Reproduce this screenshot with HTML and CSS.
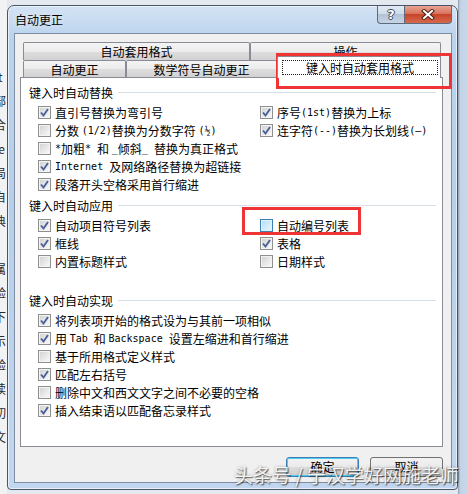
FILE: index.html
```html
<!DOCTYPE html>
<html lang="zh-CN">
<head>
<meta charset="UTF-8">
<title>自动更正</title>
<link rel="stylesheet" href="styles.css">
</head>
<body>
<div class="screen">
    <div class="bg-left">
        <div class="frags">
            <div>ft</div><div>部</div><div>合</div><div>te</div><div>局</div><div>自</div><div>典</div><div>&nbsp;</div>
            <div>属</div><div>验</div><div>下</div><div>示</div><div>验</div><div>读</div><div>切</div><div>文</div>
        </div>
    </div>
    <div class="stage">
        <div class="window">
            <div class="titlebar">
                <span class="title">自动更正</span>
                <div class="caption-btns">
                    <span class="cap help">?</span>
                    <span class="cap close">
                        <svg width="14" height="11" viewBox="0 0 14 11">
                            <path d="M3 2 L11 9 M11 2 L3 9" stroke="#4a1d14" stroke-width="4" stroke-linecap="square"/>
                            <path d="M3 2 L11 9 M11 2 L3 9" stroke="#fff" stroke-width="2" stroke-linecap="square"/>
                        </svg>
                    </span>
                </div>
            </div>
            <div class="client">
                <div class="book">
                    <div class="tabrow">
                        <div class="tab t-format">自动套用格式</div>
                        <div class="tab t-fill">操作</div>
                    </div>
                    <div class="tabrow">
                        <div class="tab t-auto">自动更正</div>
                        <div class="tab t-math">数学符号自动更正</div>
                        <div class="tab t-fill selected"><span class="focus">键入时自动套用格式</span></div>
                    </div>
                    <div class="panel">
                        <div class="group">
                            <div class="legend">键入时自动替换</div>
                            <div class="cols">
                                <div class="col">
                                    <div class="opt"><span class="cb on"><svg viewBox="0 0 11 11"><polyline points="2,5.5 4.5,8.5 9,2"/></svg></span>直引号替换为弯引号</div>
                                    <div class="opt"><span class="cb"></span>分数 <span class="en">(1/2)</span>替换为分数字符 <span class="en">(½)</span></div>
                                    <div class="opt"><span class="cb"></span><span class="en">*</span>加粗<span class="en">* </span>和 <span class="en">_</span>倾斜<span class="en">_ </span>替换为真正格式</div>
                                    <div class="opt"><span class="cb on"><svg viewBox="0 0 11 11"><polyline points="2,5.5 4.5,8.5 9,2"/></svg></span><span class="en">Internet </span>及网络路径替换为超链接</div>
                                    <div class="opt"><span class="cb on"><svg viewBox="0 0 11 11"><polyline points="2,5.5 4.5,8.5 9,2"/></svg></span>段落开头空格采用首行缩进</div>
                                </div>
                                <div class="col">
                                    <div class="opt"><span class="cb on"><svg viewBox="0 0 11 11"><polyline points="2,5.5 4.5,8.5 9,2"/></svg></span>序号<span class="en">(1st)</span>替换为上标</div>
                                    <div class="opt"><span class="cb on"><svg viewBox="0 0 11 11"><polyline points="2,5.5 4.5,8.5 9,2"/></svg></span>连字符<span class="en">(--)</span>替换为长划线<span class="en">(—)</span></div>
                                </div>
                            </div>
                        </div>
                        <div class="group g-apply">
                            <div class="legend">键入时自动应用</div>
                            <div class="cols">
                                <div class="col">
                                    <div class="opt"><span class="cb on"><svg viewBox="0 0 11 11"><polyline points="2,5.5 4.5,8.5 9,2"/></svg></span>自动项目符号列表</div>
                                    <div class="opt"><span class="cb on"><svg viewBox="0 0 11 11"><polyline points="2,5.5 4.5,8.5 9,2"/></svg></span>框线</div>
                                    <div class="opt"><span class="cb"></span>内置标题样式</div>
                                </div>
                                <div class="col">
                                    <div class="opt"><span class="cb hover"></span>自动编号列表</div>
                                    <div class="opt"><span class="cb on"><svg viewBox="0 0 11 11"><polyline points="2,5.5 4.5,8.5 9,2"/></svg></span>表格</div>
                                    <div class="opt"><span class="cb"></span>日期样式</div>
                                </div>
                            </div>
                        </div>
                        <div class="group g-do">
                            <div class="legend">键入时自动实现</div>
                            <div class="cols single">
                                <div class="col">
                                    <div class="opt"><span class="cb on"><svg viewBox="0 0 11 11"><polyline points="2,5.5 4.5,8.5 9,2"/></svg></span>将列表项开始的格式设为与其前一项相似</div>
                                    <div class="opt"><span class="cb on"><svg viewBox="0 0 11 11"><polyline points="2,5.5 4.5,8.5 9,2"/></svg></span>用 <span class="en">Tab </span>和 <span class="en">Backspace </span>设置左缩进和首行缩进</div>
                                    <div class="opt"><span class="cb"></span>基于所用格式定义样式</div>
                                    <div class="opt"><span class="cb on"><svg viewBox="0 0 11 11"><polyline points="2,5.5 4.5,8.5 9,2"/></svg></span>匹配左右括号</div>
                                    <div class="opt"><span class="cb"></span>删除中文和西文文字之间不必要的空格</div>
                                    <div class="opt"><span class="cb on"><svg viewBox="0 0 11 11"><polyline points="2,5.5 4.5,8.5 9,2"/></svg></span>插入结束语以匹配备忘录样式</div>
                                </div>
                            </div>
                        </div>
                    </div>
                </div>
                <div class="actions">
                    <button class="btn default">确定</button>
                    <button class="btn">取消</button>
                </div>
            </div>
        </div>
    </div>
    <div class="bg-right"></div>

    <!-- annotations drawn over the screenshot -->
    <div class="mark mark-tab"></div>
    <div class="mark mark-num"></div>
    <div class="watermark">头条号 / 宁汉学好网施老师</div>
</div>
</body>
</html>
```

FILE: styles.css
```css
html, body{
    margin: 0;
    padding: 0;
}
body{
    width: 468px;
    height: 494px;
    overflow: hidden;
    font-family: "Noto Sans CJK SC", "Liberation Sans", sans-serif;
    font-size: 12px;
    color: #000;
}
.screen{
    position: relative;
    display: flex;
    width: 468px;
    height: 494px;
    background: #e4e9f0;
}
.bg-left{
    width: 7px;
    overflow: hidden;
    background: #f1f2f4;
}
.frags{
    margin-left: -6px;
    padding-top: 65px;
    line-height: 24px;
    font-size: 12px;
    color: #2a2a2a;
}
.stage{
    padding-top: 5px;
}
.bg-right{
    flex: 1;
    background: linear-gradient(to right, #8a97a8 0, #c3d3e6 2px, #c9d8ea 100%);
}

/* window frame */
.window{
    width: 451px;
    height: 485px;
    box-sizing: border-box;
    border: 1px solid #48546a;
    border-radius: 7px 7px 4px 4px;
    background: linear-gradient(to bottom, #d3e3f4 0, #bcd3ee 30px, #b7cfea 200px, #c2d7ef 100%);
    box-shadow: inset 0 0 0 1px rgba(255,255,255,0.6);
    padding: 0 5px 6px 6px;
    display: flex;
    flex-direction: column;
}
.titlebar{
    height: 27px;
    display: flex;
    align-items: center;
    justify-content: space-between;
}
.title{
    padding-left: 1px;
    font-size: 12px;
    text-shadow: 0 0 6px rgba(255,255,255,0.9);
}
.caption-btns{
    align-self: flex-start;
    display: flex;
}
.cap{
    height: 18px;
    box-sizing: border-box;
    border: 1px solid #5d6a7e;
    border-top: none;
    display: flex;
    align-items: center;
    justify-content: center;
}
.help{
    width: 27px;
    border-radius: 0 0 0 4px;
    border-right: none;
    background: linear-gradient(to bottom, #e3ebf4 0, #cfdbe8 45%, #b3c3d6 50%, #c6d4e4 100%);
    color: #fff;
    font: bold 13px "DejaVu Sans", sans-serif;
    text-shadow: -1px 0 #3c4757, 1px 0 #3c4757, 0 -1px #3c4757, 0 1px #3c4757;
}
.close{
    width: 48px;
    border-radius: 0 0 4px 0;
    background: linear-gradient(to bottom, #e8a493 0, #d7735d 45%, #c7442b 50%, #d66a4e 100%);
}

/* client area */
.client{
    flex: 1;
    background: #f0f0f0;
    border: 1px solid #7e8da2;
    padding-top: 8px;
}
.book{
    margin: 0 8px 0 5px;
}
.tabrow{
    display: flex;
    margin: 0 2px 0 3px;
}
.tab{
    box-sizing: border-box;
    border: 1px solid #898c95;
    border-bottom: none;
    border-radius: 2px 2px 0 0;
    background: linear-gradient(to bottom, #f4f4f4 0, #ececec 50%, #dedede 51%, #d2d2d2 100%);
    display: flex;
    align-items: center;
    justify-content: center;
    white-space: nowrap;
}
.tabrow:first-child .tab{
    height: 18px;
}
.tabrow + .tabrow .tab{
    height: 17px;
}
.t-format{
    width: 227px;
}
.t-auto{
    width: 103px;
}
.t-math{
    width: 151px;
}
.t-fill{
    flex: 1;
}
.tabrow + .tabrow .tab.selected{
    position: relative;
    z-index: 1;
    height: 22px;
    margin: -4px 0 -1px 0;
    background: #fff;
    align-items: flex-start;
    padding: 3px 2px 0 4px;
}
.focus{
    flex: 1;
    height: 15px;
    box-sizing: border-box;
    border: 1px dotted #222;
    line-height: 13px;
    text-align: center;
}

.panel{
    height: 370px;
    box-sizing: border-box;
    border: 1px solid #898c95;
    background: #fff;
    padding: 5px 6px 0 8px;
}
.legend{
    display: flex;
    align-items: center;
    height: 18px;
    margin-bottom: 2px;
    white-space: nowrap;
}
.legend::after{
    content: "";
    flex: 1;
    border-top: 1px solid #d5dfe5;
    margin-left: 5px;
}
.g-apply{
    margin-top: 3px;
}
.g-do{
    margin-top: 21px;
}
.cols{
    display: grid;
    grid-template-columns: 222px 1fr;
    padding-left: 9px;
}
.cols.single{
    grid-template-columns: 1fr;
}
.opt{
    display: flex;
    align-items: center;
    height: 18px;
    white-space: pre;
}
.en{
    font-family: "DejaVu Sans Mono", "Liberation Mono", monospace;
    font-size: 10px;
}

/* checkbox */
.cb{
    width: 13px;
    height: 13px;
    box-sizing: border-box;
    border: 1px solid #8e8f8f;
    margin-right: 4px;
    flex: none;
    background: linear-gradient(135deg, #cfcfcf 0, #e4e4e4 45%, #fbfbfb 100%);
    box-shadow: inset 0 0 0 1px #f4f4f4;
    display: flex;
    align-items: center;
    justify-content: center;
}
.cb svg{
    width: 11px;
    height: 11px;
}
.cb polyline{
    fill: none;
    stroke: #4a5f97;
    stroke-width: 1.9;
}
.cb.hover{
    border-color: #3c7fb1;
    background: linear-gradient(135deg, #b4ddf8 0, #cfeafc 50%, #e8f6fe 100%);
    box-shadow: inset 0 0 0 1px #dff2fd;
}

/* buttons */
.actions{
    display: flex;
    justify-content: flex-end;
    gap: 11px;
    margin: 10px 8px 0 0;
}
.btn{
    width: 73px;
    height: 20px;
    padding: 0;
    box-sizing: border-box;
    border: 1px solid #707070;
    border-radius: 3px;
    background: linear-gradient(to bottom, #f2f2f2 0, #ebebeb 50%, #dddddd 51%, #cfcfcf 100%);
    font-family: "Noto Sans CJK SC", sans-serif;
    font-size: 12px;
    line-height: 16px;
    color: #000;
}
.btn.default{
    border-color: #3c7fb1;
    box-shadow: inset 0 0 0 1px #4ccbf3;
}

/* annotations */
.mark{
    position: absolute;
    border: 3px solid #ee3434;
    box-sizing: border-box;
}
.mark-tab{
    left: 276px;
    top: 53px;
    width: 176px;
    height: 36px;
}
.mark-num{
    left: 242px;
    top: 207px;
    width: 119px;
    height: 28px;
}
.watermark{
    position: absolute;
    left: 234px;
    top: 463px;
    font-size: 19px;
    line-height: 24px;
    white-space: nowrap;
    color: rgba(255,255,255,0.88);
    text-shadow: 1px 1px 1px rgba(0,0,0,0.55), 0 0 3px rgba(0,0,0,0.35);
}
```
